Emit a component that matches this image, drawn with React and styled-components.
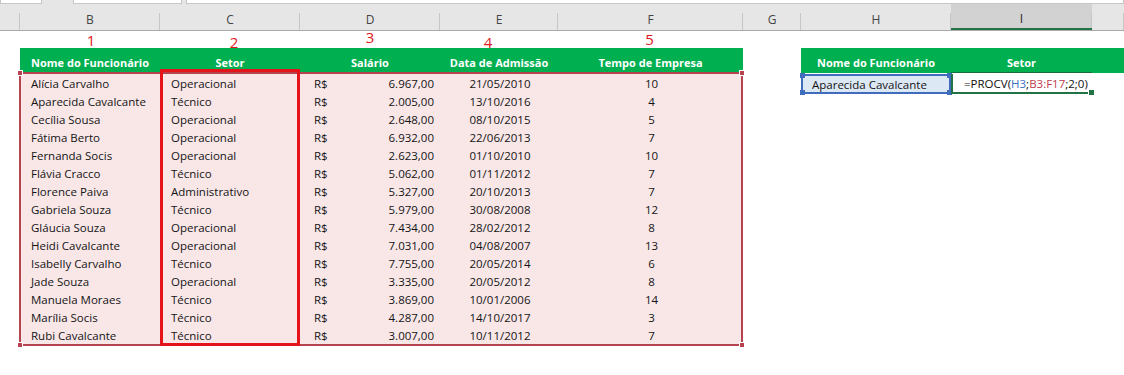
import styled, { createGlobalStyle } from "styled-components";

const GlobalStyle = createGlobalStyle`
  html, body {
    margin: 0;
    padding: 0;
    background: #fff;
  }
  body {
    font-family: "Open Sans", "Liberation Sans", sans-serif;
    font-size: 11.5px;
    color: #141414;
  }
`;

const COLS = [
  { key: "", w: 20 },
  { key: "B", w: 140 },
  { key: "C", w: 140 },
  { key: "D", w: 140 },
  { key: "E", w: 118 },
  { key: "F", w: 185 },
  { key: "G", w: 58 },
  { key: "H", w: 150 },
  { key: "I", w: 141 },
  { key: "", w: 0 },
];

const rows = [
  ["Alícia Carvalho", "Operacional", "6.967,00", "21/05/2010", "10"],
  ["Aparecida Cavalcante", "Técnico", "2.005,00", "13/10/2016", "4"],
  ["Cecília Sousa", "Operacional", "2.648,00", "08/10/2015", "5"],
  ["Fátima Berto", "Operacional", "6.932,00", "22/06/2013", "7"],
  ["Fernanda Socis", "Operacional", "2.623,00", "01/10/2010", "10"],
  ["Flávia Cracco", "Técnico", "5.062,00", "01/11/2012", "7"],
  ["Florence Paiva", "Administrativo", "5.327,00", "20/10/2013", "7"],
  ["Gabriela Souza", "Técnico", "5.979,00", "30/08/2008", "12"],
  ["Gláucia Souza", "Operacional", "7.434,00", "28/02/2012", "8"],
  ["Heidi Cavalcante", "Operacional", "7.031,00", "04/08/2007", "13"],
  ["Isabelly Carvalho", "Técnico", "7.755,00", "20/05/2014", "6"],
  ["Jade Souza", "Operacional", "3.335,00", "20/05/2012", "8"],
  ["Manuela Moraes", "Técnico", "3.869,00", "10/01/2006", "14"],
  ["Marília Socis", "Técnico", "4.287,00", "14/10/2017", "3"],
  ["Rubi Cavalcante", "Técnico", "3.007,00", "10/11/2012", "7"],
];

// hand-written annotations above the table
const marks = [
  { n: "1", dx: 1, dy: 0 },
  { n: "2", dx: 4, dy: 2 },
  { n: "3", dx: 0, dy: -3 },
  { n: "4", dx: -11, dy: 2 },
  { n: "5", dx: -1, dy: -1 },
];

export default function App() {
  return (
    <>
      <GlobalStyle />
      <Window>
        <TabStrip>
          <Tab w={42} />
          <TabGap w={31} />
          <Tab w={109} />
          <TabGap w={4} />
          <Tab grow />
        </TabStrip>

        <ColumnBar>
          {COLS.map((c, i) => (
            <ColLetter key={i} selected={c.key === "I"}>
              {c.key}
            </ColLetter>
          ))}
        </ColumnBar>

        <Sheet>
          <Gutter />

          <LeftTable>
            <MarkRow>
              {marks.map((m) => (
                <MarkCell key={m.n}>
                  <Mark dx={m.dx} dy={m.dy}>
                    {m.n}
                  </Mark>
                </MarkCell>
              ))}
            </MarkRow>

            <HeadRow>
              <HeadCell>Nome do Funcionário</HeadCell>
              <HeadCell>Setor</HeadCell>
              <HeadCell>Salário</HeadCell>
              <HeadCell>Data de Admissão</HeadCell>
              <HeadCell>Tempo de Empresa</HeadCell>
            </HeadRow>

            <Selection>
              {rows.map((r, i) => (
                <DataRow key={i}>
                  <TextCell>{r[0]}</TextCell>
                  <TextCell>{r[1]}</TextCell>
                  <MoneyCell>
                    <span>R$</span>
                    <span>{r[2]}</span>
                  </MoneyCell>
                  <CenterCell>{r[3]}</CenterCell>
                  <CenterCell>{r[4]}</CenterCell>
                </DataRow>
              ))}
              <Handle pos="tl" />
              <Handle pos="tr" />
              <Handle pos="bl" />
              <Handle pos="br" />
              <Highlight />
            </Selection>
          </LeftTable>

          <Spacer />

          <RightTable>
            <HeadRow wide>
              <HeadCell>Nome do Funcionário</HeadCell>
              <HeadCell underline>Setor</HeadCell>
              <div />
            </HeadRow>
            <LookupRow>
              <LookupCell>
                Aparecida Cavalcante
                <BlueHandle pos="tl" />
                <BlueHandle pos="tr" />
                <BlueHandle pos="bl" />
                <BlueHandle pos="br" />
              </LookupCell>
              <FormulaCell>
                =PROCV(<Ref color="#3d6fc6">H3</Ref>;
                <Ref color="#c0394b">B3:F17</Ref>;2;0)
                <GreenHandle />
              </FormulaCell>
            </LookupRow>
          </RightTable>
        </Sheet>
      </Window>
    </>
  );
}

const Window = styled.div`
  width: 1124px;
  height: 375px;
  overflow: hidden;
  background: #fff;
`;

const TabStrip = styled.div`
  display: flex;
  height: 4px;
  background: #e6e6e6;
`;

const Tab = styled.div`
  width: ${({ w }) => (w ? `${w}px` : "auto")};
  flex: ${({ grow }) => (grow ? 1 : "none")};
  background: #fff;
  border: 1px solid #c6c6c6;
  border-top: none;
  box-sizing: border-box;
`;

const TabGap = styled.div`
  width: ${({ w }) => w}px;
`;

const ColumnBar = styled.div`
  display: grid;
  grid-template-columns: ${COLS.slice(0, -1)
      .map((c) => `${c.w}px`)
      .join(" ")} 1fr;
  height: 27px;
  background: #e6e6e6;
  border-bottom: 1px solid #ababab;
  box-sizing: border-box;
`;

const ColLetter = styled.div`
  position: relative;
  display: flex;
  align-items: center;
  justify-content: center;
  padding-top: 4px;
  font-family: "Open Sans", sans-serif;
  font-size: 12px;
  color: #444;
  box-sizing: border-box;

  ${({ selected }) =>
    selected &&
    `
    background: #d2d2d2;
    border-bottom: 2px solid #217346;
    color: #262626;
  `}

  &::after {
    content: "";
    position: absolute;
    right: 0;
    top: 9px;
    bottom: 0;
    width: 1px;
    background: #c6c6c6;
  }
`;

const Sheet = styled.div`
  display: flex;
  align-items: flex-start;
`;

const Gutter = styled.div`
  width: 20px;
  flex: none;
`;

const Spacer = styled.div`
  width: 58px;
  flex: none;
`;

const LeftTable = styled.div`
  width: 723px;
  flex: none;
`;

const FIVE = "140px 140px 140px 118px 185px";

const MarkRow = styled.div`
  display: grid;
  grid-template-columns: ${FIVE};
  height: 17px;
`;

const MarkCell = styled.div`
  display: flex;
  justify-content: center;
  align-items: flex-end;
`;

const Mark = styled.span`
  font-family: "Open Sans", sans-serif;
  font-size: 15px;
  line-height: 15px;
  color: #e0191d;
  transform: translate(${({ dx }) => dx}px, ${({ dy }) => dy}px);
`;

const HeadRow = styled.div`
  display: grid;
  grid-template-columns: ${({ wide }) => (wide ? "150px 141px 1fr" : FIVE)};
  height: 25px;
  background: #00b050;
`;

const HeadCell = styled.div`
  display: flex;
  align-items: center;
  justify-content: center;
  padding-top: 4px;
  box-sizing: border-box;
  color: #fff;
  font-weight: 700;
  font-size: 11px;
  ${({ underline }) => underline && `border-bottom: 1px solid #1c6b3f;`}
`;

const Selection = styled.div`
  position: relative;
  margin-left: -1px;
  margin-top: -1px;
  border: 2px solid #b5444f;
  background: #f9e7e8;
`;

const Handle = styled.span`
  position: absolute;
  width: 6px;
  height: 6px;
  background: #b5444f;
  border: 1px solid #fff;
  box-sizing: border-box;
  ${({ pos }) => (pos[0] === "t" ? "top: -4px;" : "bottom: -4px;")}
  ${({ pos }) => (pos[1] === "l" ? "left: -4px;" : "right: -4px;")}
`;

const Highlight = styled.div`
  position: absolute;
  left: 139px;
  top: -5px;
  width: 140px;
  height: 277px;
  border: 3px solid #e5141b;
  box-sizing: border-box;
  pointer-events: none;
`;

const DataRow = styled.div`
  display: grid;
  grid-template-columns: ${FIVE};
  height: 18px;
  align-items: center;
`;

const TextCell = styled.div`
  padding-left: 10px;
  white-space: nowrap;
`;

const MoneyCell = styled.div`
  display: flex;
  justify-content: space-between;
  padding: 0 7px 0 13px;
`;

const CenterCell = styled.div`
  text-align: center;
`;

const RightTable = styled.div`
  flex: 1;
  padding-top: 17px;
`;

const LookupRow = styled.div`
  display: grid;
  grid-template-columns: 150px 141px;
  height: 20px;
  margin-top: 1px;
`;

const LookupCell = styled.div`
  position: relative;
  display: flex;
  align-items: center;
  padding-left: 9px;
  background: #dde8f5;
  border: 2px solid #3f6cbd;
  box-sizing: border-box;
  white-space: nowrap;
`;

const BlueHandle = styled.span`
  position: absolute;
  width: 5px;
  height: 5px;
  background: #3f6cbd;
  ${({ pos }) => (pos[0] === "t" ? "top: -3px;" : "bottom: -3px;")}
  ${({ pos }) => (pos[1] === "l" ? "left: -3px;" : "right: -3px;")}
`;

const FormulaCell = styled.div`
  position: relative;
  display: flex;
  align-items: center;
  padding-left: 11px;
  border-left: 2px solid #217346;
  border-bottom: 2px solid #217346;
  box-sizing: border-box;
  color: #111;
  white-space: nowrap;
  font-size: 11.5px;
`;

const Ref = styled.span`
  color: ${({ color }) => color};
`;

const GreenHandle = styled.span`
  position: absolute;
  right: -3px;
  bottom: -4px;
  width: 5px;
  height: 5px;
  background: #217346;
  border: 1px solid #fff;
`;
